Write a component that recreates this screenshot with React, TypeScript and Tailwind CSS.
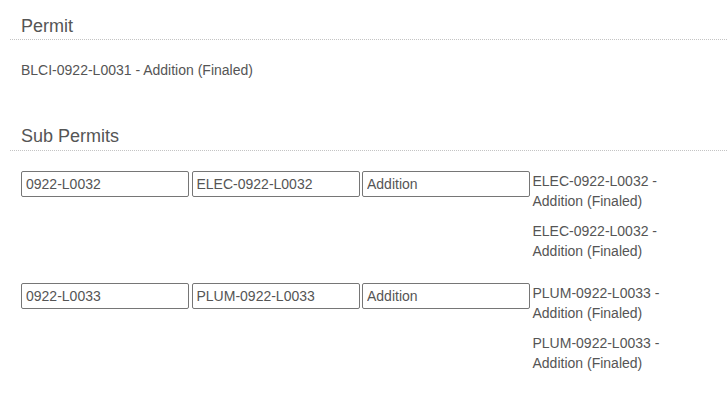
import React from 'react';

type SubPermit = {
  id: string;
  number: string;
  type: string;
  statuses: string[];
};

const subPermits: SubPermit[] = [
  {
    id: '0922-L0032',
    number: 'ELEC-0922-L0032',
    type: 'Addition',
    statuses: ['ELEC-0922-L0032 - Addition (Finaled)', 'ELEC-0922-L0032 - Addition (Finaled)'],
  },
  {
    id: '0922-L0033',
    number: 'PLUM-0922-L0033',
    type: 'Addition',
    statuses: ['PLUM-0922-L0033 - Addition (Finaled)', 'PLUM-0922-L0033 - Addition (Finaled)'],
  },
];

function SectionHeading({ title, className = '' }: { title: string; className?: string }) {
  return (
    <h4
      className={`ml-[10px] pl-[11px] text-[18px] leading-[20px] font-normal text-[#555] border-b border-dotted border-[#c4c4c4] ${className}`}
    >
      {title}
    </h4>
  );
}

function Field({ value }: { value: string }) {
  return (
    <input
      type="text"
      readOnly
      defaultValue={value}
      className="w-[168px] h-[26px] border border-[#767676] rounded-[2px] px-[4px] text-[14px] text-[#555] bg-white outline-none"
    />
  );
}

export default function App() {
  return (
    <div
      className="w-[727px] h-[407px] overflow-hidden bg-white text-[#555] text-[14px] leading-[20px]"
      style={{ fontFamily: '"Liberation Sans", Arial, sans-serif' }}
    >
      <SectionHeading title="Permit" className="mt-[16px] pb-[3px]" />
      <p className="mt-[20px] pl-[21px]">BLCI-0922-L0031 - Addition (Finaled)</p>

      <SectionHeading title="Sub Permits" className="mt-[46px] pb-[4px]" />
      <div className="mt-[20px] pl-[21px]">
        {subPermits.map((sp) => (
          <div key={sp.id} className="grid grid-cols-[repeat(4,170.5px)] items-start mb-[12px]">
            <Field value={sp.id} />
            <Field value={sp.number} />
            <Field value={sp.type} />
            <div className="w-[140px]">
              {sp.statuses.map((s, i) => (
                <p key={i} className="mb-[10px]">
                  {s}
                </p>
              ))}
            </div>
          </div>
        ))}
      </div>
    </div>
  );
}
